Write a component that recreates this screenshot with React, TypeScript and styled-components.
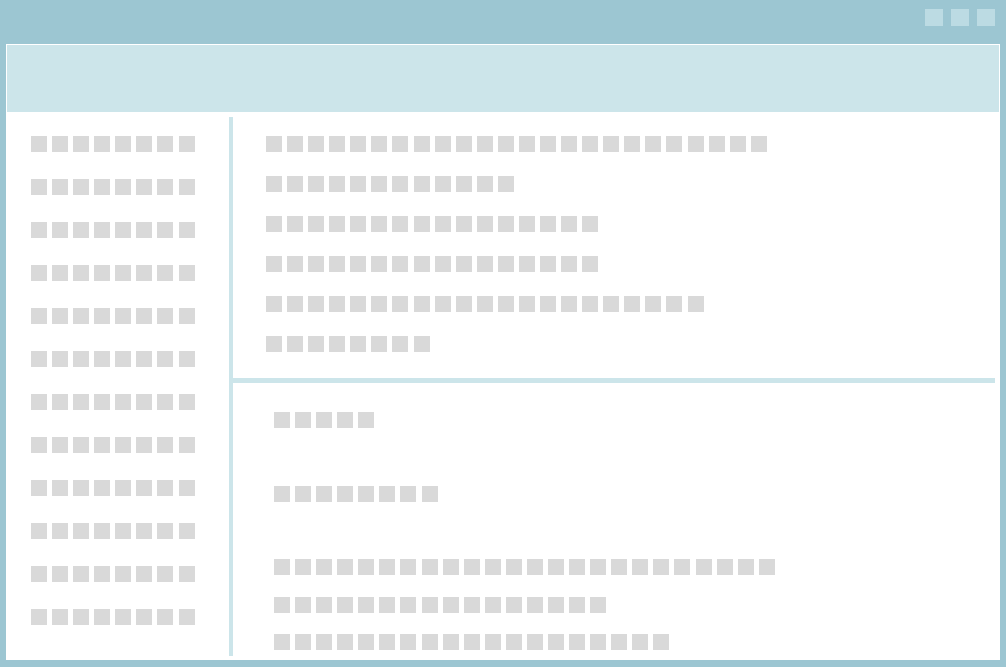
import styled, { createGlobalStyle } from "styled-components";

const FRAME = "#9cc6d2";
const LIGHT = "#cce5ea";
const BLOCK = "#d9d9d9";

const GlobalStyle = createGlobalStyle`
  html, body {
    margin: 0;
    padding: 0;
    background: ${FRAME};
    font-family: "Liberation Sans", Arial, sans-serif;
  }
`;

const Window = styled.div`
  width: 1006px;
  height: 667px;
  box-sizing: border-box;
  background: ${FRAME};
  padding: 0 6px 7px 6px;
  display: flex;
  flex-direction: column;
`;

const TitleBar = styled.div`
  height: 44px;
  flex: none;
  display: flex;
  justify-content: flex-end;
  align-items: flex-start;
  gap: 8px;
  padding: 9px 5px 0 0;
  box-sizing: border-box;
`;

const WinButton = styled.div`
  width: 18px;
  height: 17px;
  background: #bcdbe3;
`;

const Inner = styled.div`
  flex: 1;
  background: #fff;
  padding: 1px 1px 0 1px;
  display: flex;
  flex-direction: column;
`;

const Header = styled.div`
  height: 67px;
  flex: none;
  background: ${LIGHT};
`;

const Body = styled.div`
  flex: 1;
  display: grid;
  grid-template-columns: 222px 4px 1fr;
  padding: 5px 4px 4px 0;
`;

const Sidebar = styled.div`
  display: flex;
  flex-direction: column;
  gap: 27px;
  padding: 19px 0 0 24px;
`;

const VDivider = styled.div`
  background: ${LIGHT};
`;

const Main = styled.div`
  display: flex;
  flex-direction: column;
`;

const TopPane = styled.div`
  height: 261px;
  display: flex;
  flex-direction: column;
  gap: 24px;
  padding: 19px 0 0 33px;
  box-sizing: border-box;
`;

const HDivider = styled.div`
  height: 5px;
  background: ${LIGHT};
`;

const BottomPane = styled.div`
  display: flex;
  flex-direction: column;
  padding: 29px 0 0 41px;
`;

const Row = styled.div<{ $top?: number }>`
  display: flex;
  gap: 5.09px;
  margin-top: ${(p) => p.$top ?? 0}px;
`;

const Block = styled.div`
  width: 16px;
  height: 16px;
  flex: none;
  background: ${BLOCK};
`;

const Blocks = ({ n, top }: { n: number; top?: number }) => (
  <Row $top={top}>
    {Array.from({ length: n }).map((_, i) => (
      <Block key={i} />
    ))}
  </Row>
);

const topRows = [24, 12, 16, 16, 21, 8];
const bottomRows: [number, number][] = [
  [5, 0],
  [8, 58],
  [24, 57],
  [16, 22],
  [19, 21],
];

export default function App() {
  return (
    <>
      <GlobalStyle />
      <Window>
        <TitleBar>
          <WinButton />
          <WinButton />
          <WinButton />
        </TitleBar>
        <Inner>
          <Header />
          <Body>
            <Sidebar>
              {Array.from({ length: 12 }).map((_, i) => (
                <Blocks key={i} n={8} />
              ))}
            </Sidebar>
            <VDivider />
            <Main>
              <TopPane>
                {topRows.map((n, i) => (
                  <Blocks key={i} n={n} />
                ))}
              </TopPane>
              <HDivider />
              <BottomPane>
                {bottomRows.map(([n, top], i) => (
                  <Blocks key={i} n={n} top={top} />
                ))}
              </BottomPane>
            </Main>
          </Body>
        </Inner>
      </Window>
    </>
  );
}
